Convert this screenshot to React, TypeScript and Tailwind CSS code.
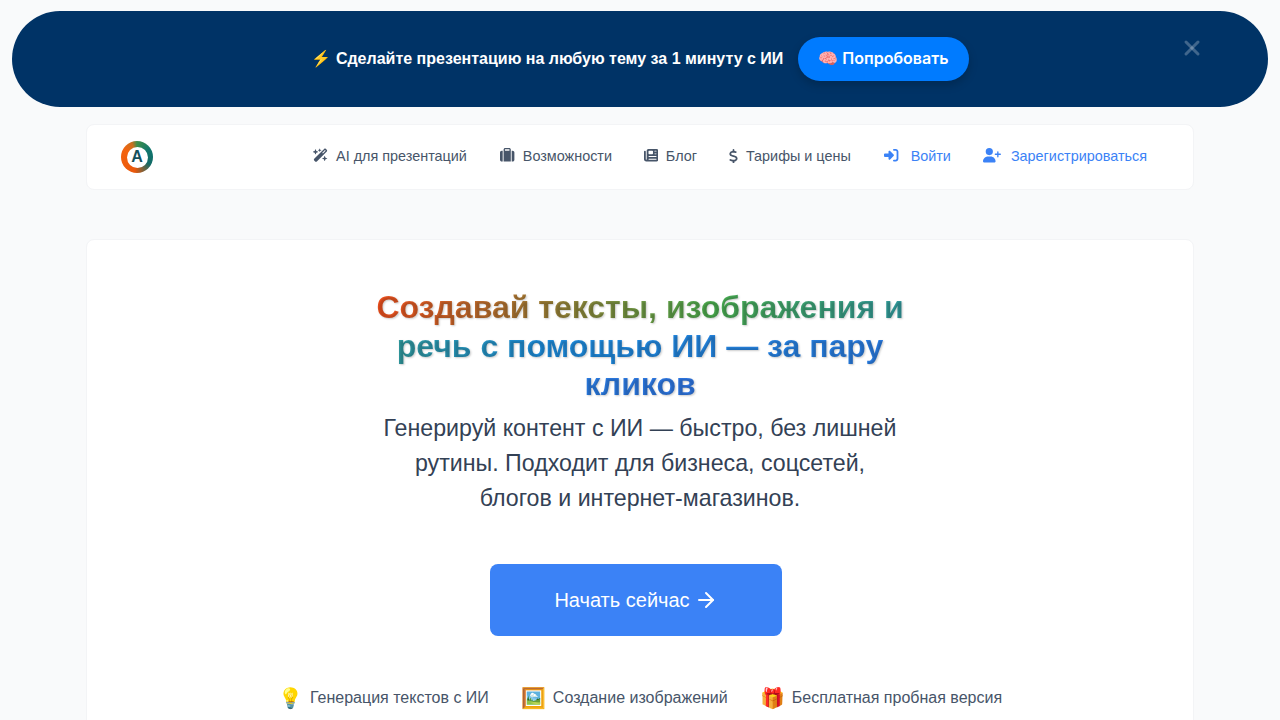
import { FaWandMagicSparkles, FaSuitcase, FaNewspaper, FaDollarSign, FaRightToBracket, FaUserPlus } from "react-icons/fa6";
import { ArrowRight, X } from "lucide-react";

const sans = "font-['Liberation_Sans',Arial,sans-serif]";

function NavItem({ icon, label, blue, cls }: { icon: React.ReactNode; label: string; blue?: boolean; cls: string }) {
  return (
    <a className={`flex items-center text-[14.4px] ${cls} ${blue ? "text-[#3b82f6]" : "text-[#475569]"}`}>
      {icon}
      <span>{label}</span>
    </a>
  );
}

function Feature({ emoji, label }: { emoji: string; label: string }) {
  return (
    <div className="flex items-center gap-2 text-[#475569]">
      <span className="flex w-6 translate-x-[1px] justify-center text-[20px] leading-6">{emoji}</span>
      <span className="text-base">{label}</span>
    </div>
  );
}

export default function App() {
  return (
    <div className={`h-screen overflow-hidden bg-[#f9fafb] ${sans}`}>
      <div className="relative mx-3 mt-[11px] flex h-24 items-center justify-center rounded-[48px] bg-[#003366] text-white">
        <span className="text-base font-bold">⚡ Сделайте презентацию на любую тему за 1 минуту с ИИ</span>
        <button className="ml-[15px] h-11 rounded-[22px] bg-[#007bff] px-5 pb-[2px] font-['Inter',sans-serif] text-base font-semibold text-white shadow-[0_4px_10px_rgba(0,0,0,0.2)]">
          🧠 Попробовать
        </button>
        <X className="absolute right-[64px] top-[25px] h-6 w-6 text-white/25" strokeWidth={3} />
      </div>

      <nav className="mx-auto mt-[17px] flex h-[66px] w-[1108px] items-center justify-between rounded-lg border border-[#f3f4f6] bg-white pl-[34px] pr-[46px]">
        <div className="flex h-8 w-8 items-center justify-center rounded-full bg-[conic-gradient(#3f8f4a_0deg,#0f766e_60deg,#136a66_120deg,#ea580c_190deg,#f4640f_300deg,#c9701f_340deg,#3f8f4a_360deg)]">
          <div className="flex h-[21px] w-[21px] items-center justify-center rounded-full bg-white text-[16px] font-bold leading-none text-[#14505c]">A</div>
        </div>
        <div className="flex items-center gap-8">
          <NavItem cls="gap-2 mr-[1.5px]" icon={<FaWandMagicSparkles className="mb-[3px] h-[14.4px] w-[15px]" />} label="AI для презентаций" />
          <NavItem cls="gap-2" icon={<FaSuitcase className="mb-[3px] h-[14.4px] w-[14.4px]" />} label="Возможности" />
          <NavItem cls="gap-[7.5px]" icon={<FaNewspaper className="mb-[3px] h-[14.4px] w-[14.4px]" />} label="Блог" />
          <NavItem cls="gap-2 mr-[1.5px]" icon={<FaDollarSign className="mb-[2px] h-[14.4px] w-[9px]" />} label="Тарифы и цены" />
          <NavItem cls="gap-3" blue icon={<FaRightToBracket className="mb-[3px] h-[14.4px] w-[14.4px]" />} label="Войти" />
          <NavItem cls="gap-2.5" blue icon={<FaUserPlus className="mb-[3px] h-[14.4px] w-[18px]" />} label="Зарегистрироваться" />
        </div>
      </nav>

      <main className="mx-auto mt-[49px] flex w-[1108px] flex-col items-center rounded-lg border border-[#f3f4f6] bg-white pt-[48px] pb-10">
        <h1 className="w-[532px] text-center text-[32px] font-bold leading-[38.6px]">
          <span className="bg-[linear-gradient(to_right,#f4511e_0%,#4caf50_30%,#1e8fe0_60%,#3079e8_100%)] bg-clip-text text-transparent [text-shadow:1px_1px_2px_rgba(0,0,0,0.2)]">
            Создавай тексты, изображения и речь с помощью ИИ — за пару кликов
          </span>
        </h1>
        <p className="mt-[7px] w-[520px] text-center text-[23.2px] leading-[35px] text-[#334155]">
          Генерируй контент с ИИ — быстро, без лишней рутины. Подходит для бизнеса, соцсетей, блогов и интернет-магазинов.
        </p>
        <button className="mr-2 mt-[48.6px] flex h-[72px] w-[292px] items-center justify-center gap-1 rounded-lg bg-[#3b82f6] text-xl text-white">
          Начать сейчас
          <ArrowRight className="h-6 w-6" />
        </button>
        <div className="mt-[50px] flex items-center gap-8">
          <Feature emoji="💡" label="Генерация текстов с ИИ" />
          <Feature emoji="🖼️" label="Создание изображений" />
          <Feature emoji="🎁" label="Бесплатная пробная версия" />
        </div>
      </main>
    </div>
  );
}
